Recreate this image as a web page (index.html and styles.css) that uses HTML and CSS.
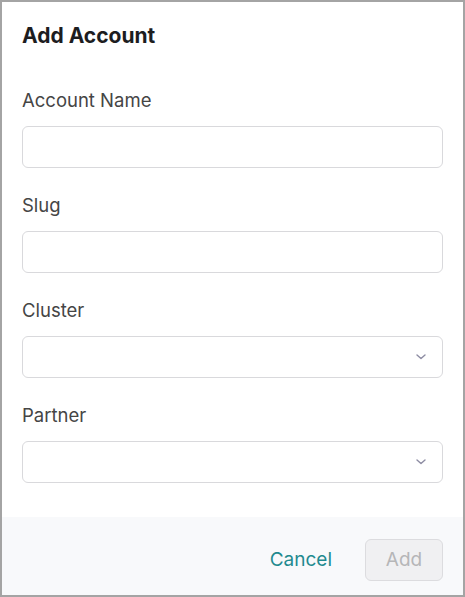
FILE: index.html
```html
<!DOCTYPE html>
<html>
<head>
<meta charset="utf-8">
<link rel="stylesheet" href="styles.css">
</head>
<body>
<div class="modal">
  <div class="content">
    <h1 class="title">Add Account</h1>
    <div class="field">
      <label class="label">Account Name</label>
      <div class="input"></div>
    </div>
    <div class="field">
      <label class="label">Slug</label>
      <div class="input"></div>
    </div>
    <div class="field">
      <label class="label">Cluster</label>
      <div class="input select">
        <svg class="chev" width="10" height="6" viewBox="0 0 10 6"><path d="M1 1 L5 4.6 L9 1" fill="none" stroke="#8d8ca3" stroke-width="1.4" stroke-linecap="round" stroke-linejoin="round"/></svg>
      </div>
    </div>
    <div class="field">
      <label class="label">Partner</label>
      <div class="input select">
        <svg class="chev" width="10" height="6" viewBox="0 0 10 6"><path d="M1 1 L5 4.6 L9 1" fill="none" stroke="#8d8ca3" stroke-width="1.4" stroke-linecap="round" stroke-linejoin="round"/></svg>
      </div>
    </div>
  </div>
  <div class="footer">
    <span class="cancel">Cancel</span>
    <span class="add">Add</span>
  </div>
</div>
</body>
</html>
```
FILE: styles.css
```css
html, body {
  margin: 0;
  padding: 0;
  background: #ffffff;
}
body {
  font-family: Inter, "Noto Sans", sans-serif;
}
.modal {
  width: 465px;
  height: 597px;
  box-sizing: border-box;
  border: 2px solid #a4a4a4;
  display: flex;
  flex-direction: column;
  background: #ffffff;
  overflow: hidden;
}
.content {
  padding: 22px 20px 0 20px;
  display: flex;
  flex-direction: column;
}
.title {
  margin: 0 0 40px 0;
  font-size: 21px;
  line-height: 24px;
  font-weight: 700;
  color: #1d1d1f;
}
.field {
  display: flex;
  flex-direction: column;
  margin-bottom: 25px;
}
.label {
  font-size: 18.5px;
  line-height: 24px;
  color: #454545;
  margin-bottom: 14px;
}
.input {
  height: 42px;
  box-sizing: border-box;
  border: 1px solid #d9d9dc;
  border-radius: 6px;
  background: #fff;
  display: flex;
  align-items: center;
  justify-content: flex-end;
  padding-right: 16px;
}
.chev {
  display: block;
}
.footer {
  margin-top: auto;
  height: 78px;
  box-sizing: border-box;
  background: #f8f9fb;
  display: flex;
  align-items: flex-start;
  justify-content: flex-end;
  padding: 22px 20px 0 0;
  gap: 33px;
}
.cancel {
  font-size: 19px;
  line-height: 42px;
  color: #1f8a8f;
}
.add {
  width: 78px;
  height: 42px;
  box-sizing: border-box;
  border: 1px solid #dcdcdf;
  border-radius: 6px;
  background: #f0f0f2;
  color: #b6b6b8;
  font-size: 19px;
  line-height: 40px;
  text-align: center;
}
```
